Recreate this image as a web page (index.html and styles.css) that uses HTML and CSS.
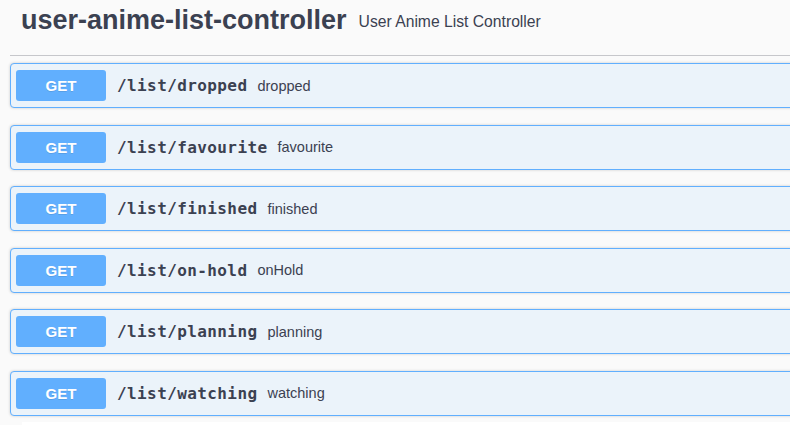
FILE: index.html
```html
<!DOCTYPE html>
<html>
<head>
<meta charset="utf-8">
<link rel="stylesheet" href="styles.css">
</head>
<body>
<div class="wrapper">
  <h3 class="tag">
    <span class="tag-name">user-anime-list-controller</span>
    <small class="tag-desc">User Anime List Controller</small>
  </h3>
  <div class="ops">
    <div class="op"><span class="method">GET</span><span class="path">/list/dropped</span><span class="desc">dropped</span></div>
    <div class="op"><span class="method">GET</span><span class="path">/list/favourite</span><span class="desc">favourite</span></div>
    <div class="op"><span class="method">GET</span><span class="path">/list/finished</span><span class="desc">finished</span></div>
    <div class="op"><span class="method">GET</span><span class="path">/list/on-hold</span><span class="desc">onHold</span></div>
    <div class="op"><span class="method">GET</span><span class="path">/list/planning</span><span class="desc">planning</span></div>
    <div class="op"><span class="method">GET</span><span class="path">/list/watching</span><span class="desc">watching</span></div>
  </div>
  <div class="next"></div>
</div>
</body>
</html>
```
FILE: styles.css
```css
html, body {
  margin: 0;
  padding: 0;
  background: #fafafa;
  overflow: hidden;
}
body {
  width: 790px;
  height: 425px;
  font-family: "Liberation Sans", Arial, sans-serif;
  color: #3b4151;
}
.wrapper {
  width: 1100px;
  padding-left: 10px;
}
.tag {
  margin: 0 0 7px 0;
  padding: 5px 20px 0 11px;
  height: 50px;
  display: flex;
  align-items: baseline;
  border-bottom: 1px solid #c6c7cb;
  font-weight: normal;
}
.tag-name {
  font-size: 27px;
  font-weight: bold;
  color: #3b4151;
}
.tag-desc {
  font-size: 15.7px;
  padding: 0 10px 0 12px;
  color: #3b4151;
  position: relative;
  top: -2px;
}
.ops {
  display: flex;
  flex-direction: column;
  gap: 16.6px;
}
.op {
  display: flex;
  align-items: center;
  height: 43px;
  padding: 0 5px;
  border: 1px solid #61affe;
  border-radius: 4px;
  background: #ebf3fa;
  box-shadow: 0 0 3px rgba(0, 0, 0, 0.19);
}
.method {
  width: 90px;
  height: 31px;
  display: flex;
  align-items: center;
  justify-content: center;
  background: #61affe;
  border-radius: 3px;
  color: #fff;
  font-weight: bold;
  font-size: 15px;
  text-shadow: 0 1px 0 rgba(0, 0, 0, 0.1);
}
.path {
  padding: 0 10px 0 11px;
  font-family: "DejaVu Sans Mono", monospace;
  font-weight: bold;
  font-size: 16px;
  letter-spacing: 0.4px;
  color: #3b4151;
}
.desc {
  font-size: 14.5px;
  color: #3b4151;
}
.next {
  margin: 6px 0 0 12px;
  height: 40px;
  background: #fff;
}
```
